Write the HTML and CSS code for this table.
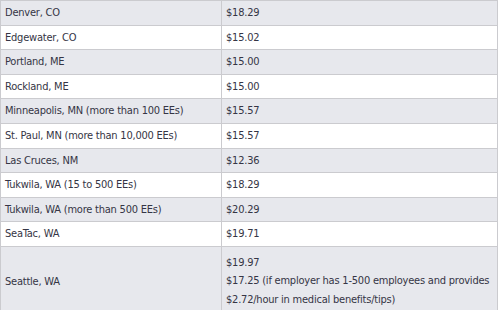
FILE: index.html
```html
<!DOCTYPE html>
<html>
<head>
    <meta charset="utf-8" />
    <title>Minimum wage</title>
    <link rel="stylesheet" href="styles.css">
</head>
<body>
    <table class="wage-table">
        <tr class="odd"><td class="city">Denver, CO</td><td>$18.29</td></tr>
        <tr><td class="city">Edgewater, CO</td><td>$15.02</td></tr>
        <tr class="odd"><td class="city">Portland, ME</td><td>$15.00</td></tr>
        <tr><td class="city">Rockland, ME</td><td>$15.00</td></tr>
        <tr class="odd"><td class="city">Minneapolis, MN (more than 100 EEs)</td><td>$15.57</td></tr>
        <tr><td class="city">St. Paul, MN (more than 10,000 EEs)</td><td>$15.57</td></tr>
        <tr class="odd"><td class="city">Las Cruces, NM</td><td>$12.36</td></tr>
        <tr><td class="city">Tukwila, WA (15 to 500 EEs)</td><td>$18.29</td></tr>
        <tr class="odd"><td class="city">Tukwila, WA (more than 500 EEs)</td><td>$20.29</td></tr>
        <tr><td class="city">SeaTac, WA</td><td>$19.71</td></tr>
        <tr class="odd">
            <td class="city">Seattle, WA</td>
            <td class="multi">$19.97<br />$17.25 (if employer has 1-500 employees and provides $2.72/hour in medical benefits/tips)</td>
        </tr>
    </table>
</body>
</html>
```

FILE: styles.css
```css
body {
    margin: 0;
    background: #fff;
}

.wage-table {
    width: 498px;
    border-collapse: collapse;
    font-family: "DejaVu Sans Condensed", "DejaVu Sans", sans-serif;
    font-size: 11px;
    letter-spacing: -0.22px;
    color: #353545;
    table-layout: fixed;
}

.wage-table td {
    border: 1px solid #cbcbcf;
    padding: 4px 3px 4px 4px;
    line-height: 15.6px;
    vertical-align: middle;
}

.wage-table .city {
    width: 213px;
}

.wage-table tr.odd td {
    background-color: #e7e8ed;
}

.wage-table td.multi {
    padding-top: 7px;
    padding-bottom: 8px;
    line-height: 18.5px;
}
```
